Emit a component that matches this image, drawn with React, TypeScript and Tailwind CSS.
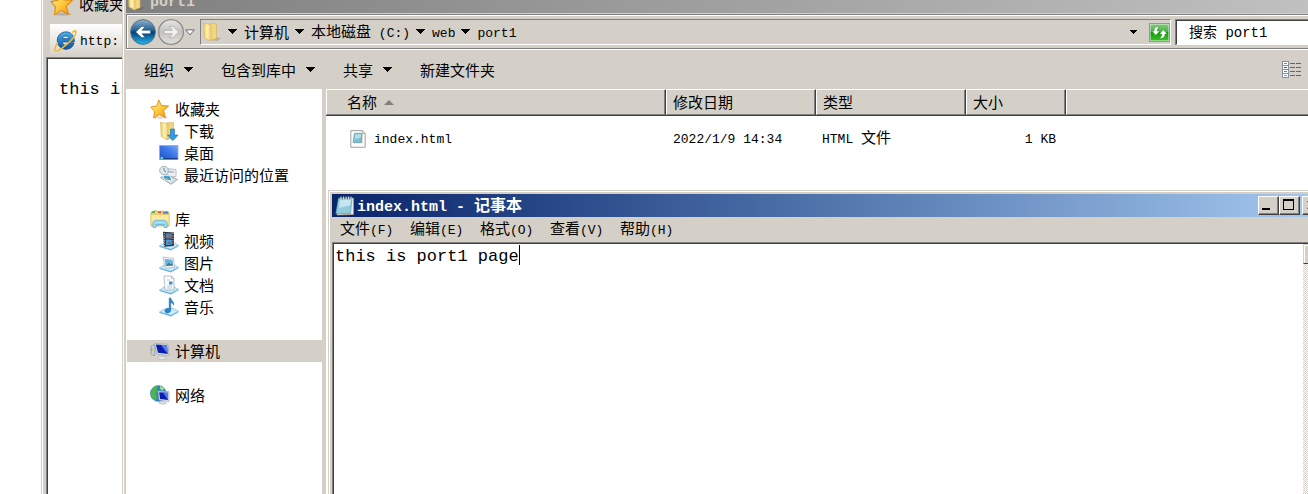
import { useState } from 'react';
import type { ReactNode } from 'react';

interface TreeItem {
  label: string;
  icon: ReactNode;
  root?: boolean;
}

interface FileRow {
  name: string;
  modified: string;
  type: string;
  size: string;
}

const mono = "font-['Liberation_Mono','Noto_Sans_CJK_SC',monospace]";

// Latin runs are set one step smaller than the Chinese characters around them.
function Mixed({ text }: { text: string }) {
  const parts = text.split(/([\x20-\x7e]+)/).filter(Boolean);
  return (
    <span className="whitespace-pre">
      {parts.map((part, i) =>
        /[\x20-\x7e]/.test(part) ? (
          <span key={i} className={`${mono} text-[13px]`}>{part}</span>
        ) : (
          part
        )
      )}
    </span>
  );
}

function Arrow() {
  return (
    <svg className="w-[10px] h-[6px] shrink-0" viewBox="0 0 10 6" shapeRendering="crispEdges">
      <path d="M0 0h9v1H8v1H7v1H6v1H5v1H4V4H3V3H2V2H1V1H0z" fill="#000" />
    </svg>
  );
}

function StarIcon({ className }: { className: string }) {
  return (
    <svg className={className} viewBox="0 0 20 20">
      <defs>
        <linearGradient id="star" x1="0" y1="0" x2="1" y2="1">
          <stop offset="0" stopColor="#fff3a0" />
          <stop offset="0.5" stopColor="#ffc93c" />
          <stop offset="1" stopColor="#f08a10" />
        </linearGradient>
      </defs>
      <ellipse cx="11" cy="18.5" rx="7" ry="1.2" fill="#000" opacity="0.15" />
      <path d="M8.8 1l2.6 5.6 7.2.3-5 4.9 1.9 6.9-6.2-3.2-5.6 3.6.9-6.7L.8 8l6-1.2z" fill="url(#star)" stroke="#dd8a1c" strokeWidth="0.9" strokeLinejoin="round" />
    </svg>
  );
}

function FolderIcon({ className, arrow }: { className: string; arrow?: boolean }) {
  return (
    <svg className={className} viewBox="0 0 20 20">
      <defs>
        <linearGradient id="folder" x1="0" y1="0" x2="1" y2="0">
          <stop offset="0" stopColor="#e8c860" />
          <stop offset="0.5" stopColor="#fff2b0" />
          <stop offset="1" stopColor="#eacb69" />
        </linearGradient>
      </defs>
      <path d="M11 15l8 1-4 3-7-1z" fill="#000" opacity="0.16" />
      <path d="M8 1.5l6.5.2v15L7 18.5z" fill="#f0d684" stroke="#d3ae52" strokeWidth="0.6" />
      <path d="M1.5 1.2l7.6 1.6L9 19l-6.8-3.4z" fill="url(#folder)" stroke="#d8b75a" strokeWidth="0.6" />
      {arrow && <path d="M11.5 8h4v6H19l-5.2 5.6L8.5 14h3z" fill="#2e9be8" stroke="#1b6fba" strokeWidth="0.6" />}
    </svg>
  );
}

function DesktopIcon() {
  return (
    <svg className="w-5 h-5" viewBox="0 0 20 20">
      <defs>
        <linearGradient id="desk" x1="0" y1="1" x2="1" y2="0">
          <stop offset="0" stopColor="#1d4fc4" />
          <stop offset="0.55" stopColor="#3d78ea" />
          <stop offset="1" stopColor="#7aa9f5" />
        </linearGradient>
      </defs>
      <path d="M.5 2.5h18.500v14H.5z" fill="url(#desk)" stroke="#9aabc8" strokeWidth="0.8" />
      <path d="M1 15h17.500v1.300H1z" fill="#1b3c86" />
      <circle cx="2.8" cy="15.2" r="1.400" fill="#54d1d8" />
    </svg>
  );
}

function RecentIcon() {
  return (
    <svg className="w-5 h-5" viewBox="0 0 20 20">
      <path d="M7 3.5l10 1v7l-9 1z" fill="#eef2f5" stroke="#9aa6ae" strokeWidth="0.7" />
      <path d="M9 5.5l6 .6v2l-6 .2z" fill="#b8c9d6" />
      <path d="M1.5 12.5l7-2.5 10 4.5-6.5 4.8z" fill="#d6dde2" stroke="#808b94" strokeWidth="0.7" />
      <path d="M4 10.5l7 .4 2 5-7.5-1.2z" fill="#2f8fd8" stroke="#fff" strokeWidth="0.8" />
      <path d="M5.5 13.8l2.5-1.3 3.5 2.6z" fill="#7ec878" />
      <circle cx="5" cy="5.5" r="4.3" fill="#dfe9ee" stroke="#9aa9b2" strokeWidth="0.9" />
      <path d="M5 2.8v3l2 .8" stroke="#56707e" strokeWidth="0.8" fill="none" />
    </svg>
  );
}

function LibraryIcon() {
  return (
    <svg className="w-5 h-5" viewBox="0 0 20 20">
      <path d="M1 3l5-1.5L8 3l5-1 6 1v14H1z" fill="#f0d47a" stroke="#c9a244" strokeWidth="0.7" />
      <path d="M2 2.5l3-.6v2H2z" fill="#43b649" />
      <path d="M8 2.5l3-.4v2H8z" fill="#e4572e" />
      <path d="M13 3l5-.4v2.2h-5z" fill="#3b8ede" />
      <path d="M1 5.5h18V16H1z" fill="#fae89f" stroke="#d9b85c" strokeWidth="0.5" />
      <path d="M3 18.5v-5.2l2-2h10l2 2v5.2h-3v-3H6v3z" fill="#9ddcf2" stroke="#5aaed3" strokeWidth="0.8" />
    </svg>
  );
}

function Tray() {
  return (
    <>
      <path d="M.5 15L6 11.5h8l5.5 2.8-7.5 4z" fill="#cdebfa" stroke="#7db7d8" strokeWidth="0.7" />
      <path d="M.5 15l11.5 3.3 7.5-4v1L12 19.5.5 16z" fill="#66b0de" />
    </>
  );
}

function VideoIcon() {
  return (
    <svg className="w-5 h-5" viewBox="0 0 20 20">
      <Tray />
      <path d="M4 .8l11 .6V15l-10 .8z" fill="#2d3138" />
      <path d="M6.8 2.2l6 .4v5l-6-.1z" fill="#4d86c2" />
      <path d="M6.8 8.6l6 .2v5l-5.8.5z" fill="#3f9de0" />
      <path d="M8 6.5l2.5-2.5 2.3 3.3zM8 13l2-3 2.5 3z" fill="#b65a33" />
      <path d="M5.3 2v13M14 2v12.5" stroke="#d6dade" strokeWidth="0.9" strokeDasharray="1.2 1.2" />
    </svg>
  );
}

function PictureIcon() {
  return (
    <svg className="w-5 h-5" viewBox="0 0 20 20">
      <Tray />
      <path d="M4 4l10.5 1.4 1 9L6 15z" fill="#f8fbfd" stroke="#9cadb9" strokeWidth="0.7" />
      <path d="M5.5 5.8l8 1 .7 6-7.5.4z" fill="#68b4e6" />
      <path d="M6.5 12.8l3-3 2 1.5 1.3-1 1.2 2.2z" fill="#3d7e68" />
    </svg>
  );
}

function DocumentIcon() {
  return (
    <svg className="w-5 h-5" viewBox="0 0 20 20">
      <Tray />
      <path d="M5 1h7.5L15 3.6V15H6z" fill="#fafcfd" stroke="#9aa8b2" strokeWidth="0.7" />
      <path d="M12.5 1v2.6H15" fill="#dbe5ec" stroke="#9aa8b2" strokeWidth="0.6" />
      <path d="M8 5h3M8 11h5M8 13h5" stroke="#8fb2cc" strokeWidth="0.7" />
      <path d="M10 6.5h3.5v3H10z" fill="#4591cb" />
    </svg>
  );
}

function MusicIcon() {
  return (
    <svg className="w-5 h-5" viewBox="0 0 20 20">
      <Tray />
      <path d="M10.2 1h1.5c.3 2.8 3.5 3.5 3 7.2-.6-1.6-1.6-2.3-3-2.6V13c0 1.8-1.6 3-3.3 3s-2.7-1-2.4-2.4c.4-1.6 2.4-2.5 4.2-1.9z" fill="#2584d0" stroke="#1761a2" strokeWidth="0.5" />
    </svg>
  );
}

function ComputerIcon() {
  return (
    <svg className="w-5 h-5" viewBox="0 0 20 20">
      <path d="M.8 5l4-1.5v11l-3.6-.8z" fill="#c9ced4" stroke="#858d96" strokeWidth="0.6" />
      <path d="M1.8 7v3" stroke="#49b04f" strokeWidth="0.8" />
      <path d="M4.5 2.5l13.5.8 1 11.4L7 13z" fill="#e3e7ea" stroke="#8f969e" strokeWidth="0.6" />
      <path d="M5.8 3.6l11.2.6.8 8.8L8 11.8z" fill="#0a1bb4" />
      <path d="M11 3.9l6 .3.8 8.8z" fill="#5d7df0" />
      <path d="M9 15l6 .8 1.5 2-5 .8-4-1.4z" fill="#e4e6e8" stroke="#a2a8ad" strokeWidth="0.5" />
    </svg>
  );
}

function NetworkIcon() {
  return (
    <svg className="w-5 h-5" viewBox="0 0 20 20">
      <circle cx="8.3" cy="8.5" r="7.9" fill="#2b86cb" stroke="#34709d" strokeWidth="0.5" />
      <path d="M2 4c2-3 5-3.4 6-3L6.5 4 8 6.5 5 8.5l2 3-1 4C2 14 .5 10 .6 8z" fill="#4cb64b" />
      <path d="M10 1l4 2-1 3-3-2z" fill="#9be083" />
      <path d="M8 6l11 .7v10L9 15z" fill="#e5e8ea" stroke="#8b939b" strokeWidth="0.6" />
      <path d="M9.2 7.2l8.8.6v7.3l-8-1.2z" fill="#0a1bb4" />
      <path d="M13 7.4l5 .4v7.3z" fill="#5677ee" />
      <path d="M10 16.2l5 .9 1.5 1.6-4 .6-3.5-1.2z" fill="#dfe2e4" stroke="#9aa0a5" strokeWidth="0.5" />
    </svg>
  );
}

function IeIcon() {
  return (
    <svg className="w-[23px] h-[23px] shrink-0" viewBox="0 0 23 23">
      <defs>
        <linearGradient id="ie" x1="0" y1="0" x2="0" y2="1">
          <stop offset="0" stopColor="#4ab4ec" />
          <stop offset="1" stopColor="#0c4f9f" />
        </linearGradient>
      </defs>
      <path d="M20 14h-5c-.6 1.500-1.800 2.200-3.200 2.200-2 0-3.400-1.300-3.600-3.300h12c.5-5.500-2.700-10-8.200-10-5 0-8.700 3.700-8.700 8.700s3.700 8.600 8.700 8.600c3.900 0 7-2.200 8-6.200zM8.300 9.700c.3-1.700 1.700-2.800 3.500-2.800s3 1 3.300 2.800z" fill="url(#ie)" stroke="#164f93" strokeWidth="0.9" />
      <path d="M18 3.600C20.500 1.500 22.500 1 22 3.300c-.5 3-5 8.500-10.500 13C6.500 20.500 2.500 23 1.300 21.700.3 20.500 1.500 17 3.800 13.500" fill="none" stroke="#f2b92c" strokeWidth="1.500" />
    </svg>
  );
}

function NotepadIcon() {
  return (
    <svg className="w-5 h-5 shrink-0" viewBox="0 0 20 20">
      <path d="M4 2h14.500v16.500L2 19z" fill="#e7edf0" stroke="#b9a06a" strokeWidth="0.6" />
      <path d="M3.500 2.200l13.500-.2-1.500 15.500L.8 17.600z" fill="#8fcbdc" stroke="#4d93ab" strokeWidth="0.6" />
      <path d="M5 4l11-.1-.5 5L4 12z" fill="#c4e7ef" />
      <path d="M5 .5V3M7.500.5V3M10 .5V3M12.500.5V3M15 .5V3" stroke="#3d5560" strokeWidth="1" />
      <path d="M6 .5V3M8.500.5V3M11 .5V3M13.500.5V3M16 .5V3" stroke="#fff" strokeWidth="0.7" />
    </svg>
  );
}

function HtmlFileIcon() {
  return (
    <svg className="w-4 h-[18px] shrink-0" viewBox="0 0 16 18">
      <path d="M.8.600h11.700l2.700 2.700v14H.8z" fill="#fbfbfb" stroke="#a3a3a3" strokeWidth="1" />
      <path d="M12.300.6v2.900h2.900" fill="#ddd" stroke="#a3a3a3" strokeWidth="0.7" />
      <path d="M5 3.500h7.500v9.700H4z" fill="#d8c9a4" />
      <path d="M4.500 3.300H12l-.8 9.200H3z" fill="#7cc0d4" stroke="#5597ab" strokeWidth="0.6" />
      <path d="M5.200 4.300h6l-.3 3-6 2z" fill="#b4dfe9" />
    </svg>
  );
}

function RefreshIcon() {
  return (
    <svg className="w-[21px] h-[19px]" viewBox="0 0 21 19">
      <defs>
        <linearGradient id="refresh" x1="0" y1="0" x2="0" y2="1">
          <stop offset="0" stopColor="#7ccb78" />
          <stop offset="0.45" stopColor="#4cb04a" />
          <stop offset="0.5" stopColor="#149a12" />
          <stop offset="1" stopColor="#35c422" />
        </linearGradient>
      </defs>
      <rect x="0.500" y="0.500" width="20" height="18" fill="#e7efe5" stroke="#84a183" />
      <rect x="1.500" y="1.500" width="18" height="16" fill="url(#refresh)" />
      <path d="M8.500 3.500C6 4 5 5.500 5 8H2.800l4 4.200 4-4.200H8.200c0-1.700.3-2.500 1.800-3.500zM12 15.500c3-.5 4-2 4-4.500h2.300l-4-4.200-4 4.200h2.500c0 1.700-.3 2.500-1.800 3.500z" fill="#fff" stroke="#276d26" strokeWidth="0.4" />
    </svg>
  );
}

function ViewIcon() {
  return (
    <svg className="w-5 h-[18px]" viewBox="0 0 20 18" shapeRendering="crispEdges">
      <path d="M0 0h7v17H0z" fill="#8391a8" />
      <path d="M1 1h5v3H1zM1 5h5v3H1zM1 9h5v3H1zM1 13h5v3H1z" fill="#fff" />
      <path d="M2 2h3v1H2z" fill="#5b9e72" />
      <path d="M2 6h3v1H2z" fill="#e02020" />
      <path d="M2 10h3v1H2z" fill="#3f8ad8" />
      <path d="M2 14h3v1H2z" fill="#a4b92e" />
      <path d="M8 2h5v1H8zM14 2h5v1h-5zM8 6h5v1H8zM14 6h5v1h-5zM8 10h5v1H8zM14 10h5v1h-5zM8 14h5v1H8zM14 14h5v1h-5z" fill="#52658c" />
    </svg>
  );
}

function NavIcon({ forward }: { forward?: boolean }) {
  return (
    <svg className="w-7 h-7" viewBox="0 0 28 28">
      <defs>
        <linearGradient id="nav-back" x1="0" y1="0" x2="0" y2="1">
          <stop offset="0" stopColor="#8fb2cc" />
          <stop offset="0.45" stopColor="#1f5d92" />
          <stop offset="0.5" stopColor="#043d75" />
          <stop offset="1" stopColor="#27b8ee" />
        </linearGradient>
        <linearGradient id="nav-forward" x1="0" y1="0" x2="0" y2="1">
          <stop offset="0" stopColor="#e6e5e2" />
          <stop offset="0.5" stopColor="#c4c3c0" />
          <stop offset="1" stopColor="#e2e1de" />
        </linearGradient>
      </defs>
      {forward ? (
        <>
          <circle cx="14" cy="14" r="12.400" fill="url(#nav-forward)" stroke="#8c8c8c" strokeWidth="1.300" />
          <path d="M7 12.300h8.500L12.300 8.500h3.700l5.800 5.500-5.800 5.500h-3.700l3.200-3.800H7z" fill="#f1f1f0" stroke="#a5a5a5" strokeWidth="0.7" />
        </>
      ) : (
        <>
          <circle cx="14" cy="14" r="12.400" fill="url(#nav-back)" stroke="#5e7384" />
          <path d="M21.500 12.300H13l3.200-3.800h-3.700L6.700 14l5.800 5.500h3.700L13 15.700h8.500z" fill="#fff" stroke="#1b4468" strokeWidth="0.5" />
        </>
      )}
    </svg>
  );
}

const treeGroups: TreeItem[][] = [
  [
    { label: '收藏夹', icon: <StarIcon className="w-5 h-5" />, root: true },
    { label: '下载', icon: <FolderIcon className="w-5 h-5" arrow /> },
    { label: '桌面', icon: <DesktopIcon /> },
    { label: '最近访问的位置', icon: <RecentIcon /> },
  ],
  [
    { label: '库', icon: <LibraryIcon />, root: true },
    { label: '视频', icon: <VideoIcon /> },
    { label: '图片', icon: <PictureIcon /> },
    { label: '文档', icon: <DocumentIcon /> },
    { label: '音乐', icon: <MusicIcon /> },
  ],
  [{ label: '计算机', icon: <ComputerIcon />, root: true }],
  [{ label: '网络', icon: <NetworkIcon />, root: true }],
];

const crumbs = ['计算机', '本地磁盘 (C:)', 'web', 'port1'];

const commands = [
  { label: '组织', menu: true },
  { label: '包含到库中', menu: true },
  { label: '共享', menu: true },
  { label: '新建文件夹', menu: false },
];

const files: FileRow[] = [
  { name: 'index.html', modified: '2022/1/9 14:34', type: 'HTML 文件', size: '1 KB' },
];

const notepadMenus = ['文件(F)', '编辑(E)', '格式(O)', '查看(V)', '帮助(H)'];

function BrowserWindow() {
  return (
    <section className="absolute inset-y-0 left-[41px] right-0 flex flex-col border-l border-[#d4d0c8] bg-[#d4d0c8]">
      <div className="flex grow flex-col border-l border-white pl-[3px]">
        <div className="flex h-6 items-end gap-[5px] pb-2 pl-1">
          <StarIcon className="w-6 h-6 shrink-0" />
          <span className="leading-6">收藏夹</span>
        </div>
        <div className="ml-1 flex h-[33px] items-center gap-[3px] bg-linear-to-b from-white to-[#d4d0c8] pl-1">
          <IeIcon />
          <Mixed text="http:" />
        </div>
        <div className="grow border-l border-t border-[#808080]">
          <div className={`${mono} h-full border-l border-t border-[#404040] bg-white pl-[11px] pt-[19px] text-[17px] leading-6`}>
            this is
          </div>
        </div>
      </div>
    </section>
  );
}

function AddressBar() {
  return (
    <div className="mt-px border-b border-white">
      <div className="border-y border-l border-[#808080]">
        <div className="flex items-center border-l border-t border-white">
          <button aria-label="后退" className="ml-px">
            <NavIcon />
          </button>
          <button aria-label="前进">
            <NavIcon forward />
          </button>
          <button aria-label="最近页面" className="flex w-[15px] justify-start">
            <svg className="w-[10px] h-[7px]" viewBox="0 0 10 7">
              <path d="M.8.8h8.400L5 6z" fill="#f8f8f8" stroke="#6d6d75" strokeWidth="1" />
            </svg>
          </button>
          <div className="my-[3px] flex h-[26px] min-w-0 grow items-center border border-b-white border-l-[#808080] border-r-white border-t-[#808080] pl-px">
            <FolderIcon className="w-5 h-5 mr-[6px] shrink-0" />
            {crumbs.map((crumb) => (
              <button key={crumb} className="mr-[6px] flex shrink-0 items-center gap-[6px]">
                <Arrow />
                <Mixed text={crumb} />
              </button>
            ))}
            <button aria-label="上一个位置" className="ml-auto mr-[10px] flex w-[10px] justify-center">
              <svg className="w-2 h-1" viewBox="0 0 8 4" shapeRendering="crispEdges">
                <path d="M0 0h7v1H6v1H5v1H4v1H3V3H2V2H1V1H0z" fill="#000" />
              </svg>
            </button>
            <button aria-label="刷新">
              <RefreshIcon />
            </button>
          </div>
          <div className="ml-1 w-[133px] shrink-0 border-l border-t border-[#808080]">
            <input
              aria-label="搜索"
              defaultValue="搜索 port1"
              className={`${mono} block h-[25px] w-full border-b border-l border-t border-b-white border-l-[#404040] border-t-[#404040] bg-white pb-1 pl-3 text-[14px] outline-none`}
            />
          </div>
        </div>
      </div>
    </div>
  );
}

function FolderTree() {
  const [selected, setSelected] = useState('计算机');

  return (
    <nav className="flex w-[196px] shrink-0 flex-col gap-[22px] bg-white pt-[9px]">
      {treeGroups.map((group) => (
        <ul key={group[0].label}>
          {group.map((item) => (
            <li key={item.label} className="pl-px">
              <button
                onClick={() => setSelected(item.label)}
                className={`flex h-[22px] w-full items-center text-left ${
                  item.root ? 'gap-[5px] pl-[23px]' : 'gap-[5px] pl-8'
                } ${selected === item.label ? 'bg-[#d4d0c8]' : ''}`}
              >
                {item.icon}
                {item.label}
              </button>
            </li>
          ))}
        </ul>
      ))}
    </nav>
  );
}

function FileTable() {
  const th =
    'h-[27px] border-b border-r border-t border-b-[#404040] border-r-[#404040] border-t-white p-0 text-left font-normal last:border-r-0';
  const thInner =
    'flex h-[25px] items-center border-b border-l border-r border-b-[#808080] border-l-white border-r-[#808080]';

  return (
    <table className="w-full table-fixed border-separate border-spacing-0">
      <colgroup>
        <col className="w-[340px]" />
        <col className="w-[150px]" />
        <col className="w-[150px]" />
        <col className="w-[100px]" />
        <col />
      </colgroup>
      <thead className="bg-[#d4d0c8]">
        <tr>
          <th className={th}>
            <div className={`${thInner} gap-[7px] pl-5`}>
              名称
              <svg className="w-[10px] h-[5px]" viewBox="0 0 10 5">
                <path d="M0 5l5-5 5 5z" fill="#808080" />
              </svg>
            </div>
          </th>
          <th className={th}><div className={`${thInner} pl-[6px]`}>修改日期</div></th>
          <th className={th}><div className={`${thInner} pl-[6px]`}>类型</div></th>
          <th className={th}><div className={`${thInner} pl-[6px]`}>大小</div></th>
          <th className={th}><div className="h-[25px] border-b border-l border-b-[#808080] border-l-white" /></th>
        </tr>
      </thead>
      <tbody>
        {files.map((file) => (
          <tr key={file.name}>
            <td className="pt-[11px]">
              <div className="flex h-[22px] items-center gap-2 pl-6">
                <HtmlFileIcon />
                <Mixed text={file.name} />
              </div>
            </td>
            <td className="pl-[7px] pt-[11px]"><Mixed text={file.modified} /></td>
            <td className="pl-[6px] pt-[11px]"><Mixed text={file.type} /></td>
            <td className="pr-[10px] pt-[11px] text-right"><Mixed text={file.size} /></td>
            <td />
          </tr>
        ))}
      </tbody>
    </table>
  );
}

function CaptionButton({ label, children }: { label: string; children?: ReactNode }) {
  return (
    <button
      aria-label={label}
      className="h-[19px] w-[21px] border border-b-[#404040] border-l-white border-r-[#404040] border-t-white bg-[#d4d0c8]"
    >
      <span className="flex h-full items-center justify-center border-b border-r border-[#808080]">
        {children}
      </span>
    </button>
  );
}

function NotepadWindow() {
  return (
    <section className="absolute bottom-0 left-[2px] -right-5 top-[101px] flex flex-col border-l border-t border-[#d4d0c8] bg-[#d4d0c8]">
      <div className="flex grow flex-col border-l border-t border-white pl-[2px] pr-[3px] pt-[2px]">
        <header className="flex h-[23px] items-center bg-linear-to-r from-[#0a246a] to-[#a6caf0] pl-[3px] pr-[2px] text-[16px] font-bold text-white">
          <NotepadIcon />
          <h2 className="ml-[2px] grow whitespace-pre">
            <span className={`${mono} text-[15px]`}>index.html - </span>记事本
          </h2>
          <CaptionButton label="最小化">
            <svg className="w-3 h-3" viewBox="0 0 12 12" shapeRendering="crispEdges">
              <path d="M0 9h8v2H0z" fill="#000" />
            </svg>
          </CaptionButton>
          <CaptionButton label="最大化">
            <svg className="w-3 h-3" viewBox="0 0 12 12" shapeRendering="crispEdges">
              <path d="M0 0h11v11H0zM1 2v8h9V2z" fill="#000" fillRule="evenodd" />
            </svg>
          </CaptionButton>
          <div className="ml-[2px] flex">
            <CaptionButton label="关闭">
              <svg className="w-3 h-3" viewBox="0 0 12 12">
                <path d="M2 2l8 8M10 2l-8 8" stroke="#000" strokeWidth="2" />
              </svg>
            </CaptionButton>
          </div>
        </header>
        <div className="flex h-[25px] items-center pl-2">
          {notepadMenus.map((menu) => (
            <button key={menu} className="w-[70px] text-left">
              <Mixed text={menu} />
            </button>
          ))}
        </div>
        <div className="flex grow border-l border-t border-[#808080]">
          <div className={`${mono} relative flex grow border-l border-t border-[#404040] bg-white text-[17px]`}>
            <textarea
              aria-label="index.html"
              spellCheck={false}
              defaultValue="this is port1 page"
              className="block grow resize-none bg-white pl-px pt-px leading-6 outline-none"
            />
            <span className="absolute left-[calc(18ch+1px)] top-px h-5 w-px bg-black" />
            <div className="w-[22px] bg-[repeating-conic-gradient(#d4d0c8_0_25%,#fff_0_50%)] bg-[length:2px_2px]">
              <button
                aria-label="向上滚动"
                className="block h-5 w-full border border-b-[#404040] border-l-[#d4d0c8] border-r-[#404040] border-t-[#d4d0c8] bg-[#d4d0c8]"
              >
                <span className="block h-full border-l border-t border-white" />
              </button>
            </div>
          </div>
        </div>
      </div>
    </section>
  );
}

function ExplorerWindow() {
  return (
    <section className="absolute inset-y-0 left-[122px] right-0 flex flex-col border-l border-[#d4d0c8]">
      <div className="flex grow flex-col border-l border-white bg-[#d4d0c8] pl-[2px]">
        <header className="flex h-[13px] items-end gap-[5px] overflow-hidden bg-linear-to-r from-[#808080] to-[#c0c0c0] pl-[1px] text-[15px] font-bold text-[#d4d0c8]">
          <FolderIcon className="w-[18px] h-[18px] mb-[2px] shrink-0" />
          <h1 className={`${mono} leading-5`}>port1</h1>
        </header>
        <AddressBar />
        <div className="flex h-[39px] items-center gap-[27px] pl-[18px] pr-[6px]">
          {commands.map((command) => (
            <button key={command.label} className="flex items-center gap-[10px]">
              {command.label}
              {command.menu && <Arrow />}
            </button>
          ))}
          <button aria-label="更改视图" className="ml-auto">
            <ViewIcon />
          </button>
        </div>
        <div className="flex grow gap-1">
          <FolderTree />
          <main className="relative min-w-0 grow bg-white">
            <FileTable />
            <NotepadWindow />
          </main>
        </div>
      </div>
    </section>
  );
}

export default function App() {
  return (
    <div className="relative h-screen overflow-hidden bg-white font-['Noto_Sans_CJK_SC',sans-serif] text-[15px] leading-5 text-black">
      <BrowserWindow />
      <ExplorerWindow />
    </div>
  );
}
